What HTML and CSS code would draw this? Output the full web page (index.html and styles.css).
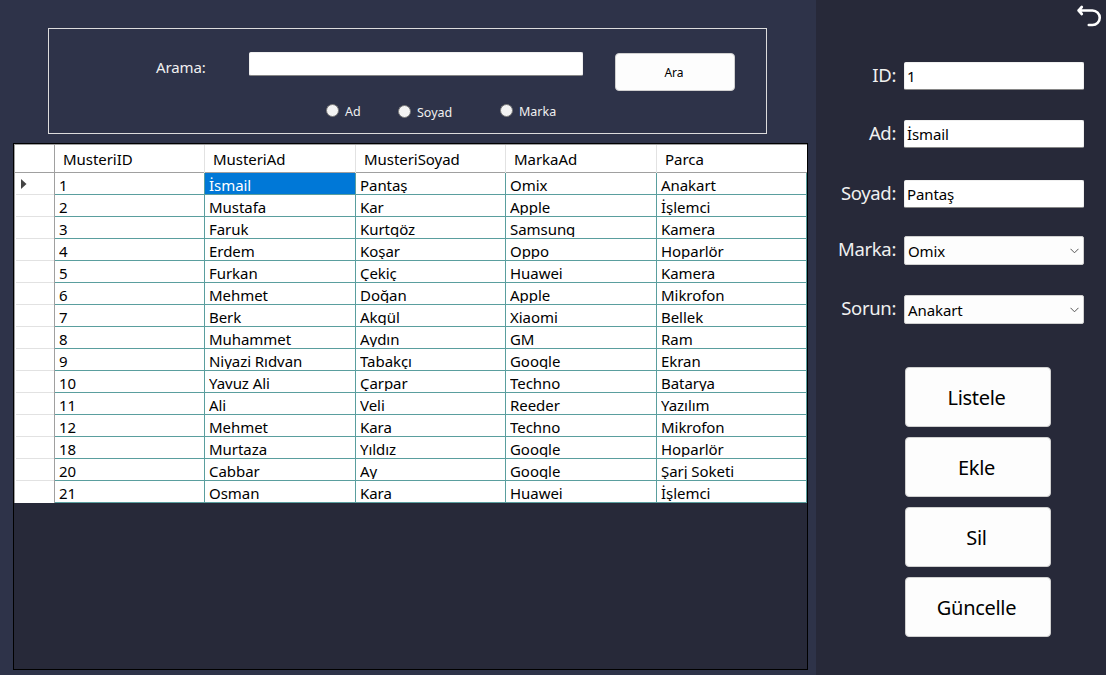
FILE: index.html
```html
<!DOCTYPE html>
<html lang="tr">
<head>
<meta charset="utf-8">
<title>Müşteri</title>
<link rel="stylesheet" href="styles.css">
<script src="grid.js" defer></script>
</head>
<body>
<div class="window">
  <main class="main">
    <section class="search">
      <div class="search-row">
        <label class="search-label" for="q">Arama:</label>
        <input class="search-input" id="q" type="text">
        <button class="search-button">Ara</button>
      </div>
      <div class="options">
        <label class="option"><i class="dot"></i><span>Ad</span></label>
        <label class="option option-soyad"><i class="dot"></i><span>Soyad</span></label>
        <label class="option option-marka"><i class="dot"></i><span>Marka</span></label>
      </div>
    </section>
    <section class="table-frame"><div class="table" id="table"></div></section>
  </main>
  <aside class="side">
    <svg class="back" width="26" height="24" viewBox="0 0 26 24"><path d="M2.5 6.5H16.5A7 7 0 0 1 16.5 21H12.8M5.8 3L2.6 6.5L5.8 10" fill="none" stroke="#fff" stroke-width="2.6" stroke-linecap="round" stroke-linejoin="round"/></svg>
    <div class="form">
      <div class="field"><span class="label">ID:</span><div class="box"><span>1</span></div></div>
      <div class="field"><span class="label">Ad:</span><div class="box"><span>İsmail</span></div></div>
      <div class="field"><span class="label">Soyad:</span><div class="box"><span>Pantaş</span></div></div>
      <div class="field field-marka"><span class="label">Marka:</span><div class="box select"><span>Omix</span><svg class="chevron" width="9" height="6" viewBox="0 0 9 6"><path d="M.5 .8L4.5 4.8L8.5 .8" fill="none" stroke="#555" stroke-width="1"/></svg></div></div>
      <div class="field field-sorun"><span class="label">Sorun:</span><div class="box select"><span>Anakart</span><svg class="chevron" width="9" height="6" viewBox="0 0 9 6"><path d="M.5 .8L4.5 4.8L8.5 .8" fill="none" stroke="#555" stroke-width="1"/></svg></div></div>
    </div>
    <div class="actions">
      <button class="action">Listele</button>
      <button class="action">Ekle</button>
      <button class="action">Sil</button>
      <button class="action">Güncelle</button>
    </div>
  </aside>
</div>
</body>
</html>
```
FILE: styles.css
```css
* { box-sizing: border-box; }
body { margin: 0; font-family: "Noto Sans", "Open Sans", sans-serif; background: #2e3349; }
button { font-family: inherit; color: #000; background: #fdfdfd; border: 1px solid #d0d0d0; padding: 0; }
.window { display: flex; width: 1106px; height: 675px; overflow: hidden; }
.main { width: 816px; padding: 28px 8px 5px 13px; background: #2e3349; }
.search { width: 719px; height: 106px; margin: 0 0 9px 35px; padding-top: 23px; border: 1px solid #dcdcdc; }
.search-row { display: flex; align-items: flex-start; height: 50px; padding-left: 107px; }
.search-label { width: 93px; padding-top: 4px; font-size: 15px; letter-spacing: -0.1px; line-height: 22px; color: #f0f0f0; }
.search-input { width: 334px; height: 24px; margin-right: 32px; padding: 0; border: 1px solid #f0f0f0; border-bottom-color: #868686; border-radius: 2px; background: #fff; }
.search-button { width: 120px; height: 38px; margin-top: 1px; padding-right: 2px; border-radius: 4px; font-size: 12px; }
.options { display: flex; padding-left: 277px; }
.option { display: flex; gap: 6px; width: 72px; height: 20px; font-size: 12.5px; line-height: 18px; color: #f0f0f0; }
.option-soyad { width: 102px; padding-top: 1px; }
.dot { width: 13px; height: 13px; margin-top: 2px; border: 1px solid #777; border-radius: 50%; background: #f3f3f3; }
.option span { margin-top: 1px; }
.table-frame { width: 795px; height: 527px; border: 1px solid #000; background: #272939; }
.table { width: 793px; }
.row { display: grid; grid-template-columns: 41px 150px 151px 150px 151px 150px; height: 22px; background: #fff; color: #000; font-size: 15px; letter-spacing: -0.05px; }
.cell { border-right: 1px solid #5a9e9e; border-bottom: 1px solid #5a9e9e; padding-left: 4px; }
.cell span { display: block; height: 20px; padding-top: 5px; overflow: hidden; line-height: 15px; white-space: nowrap; }
.selected { background: #0078d7; color: #fff; }
.row-head { display: flex; align-items: center; padding-left: 6px; border-left: 1px solid #a0a0a0; border-right: 1px solid #a0a0a0; background: linear-gradient(#e2e2e2, #e2e2e2) right bottom / 38px 1px no-repeat; }
.row:last-child .row-head { background: none; }
.head { height: 29px; border-top: 1px solid #a0a0a0; border-bottom: 1px solid #a0a0a0; }
.head .row-head { background: none; }
.head-cell { padding-left: 8px; line-height: 29px; background: linear-gradient(#e2e2e2, #e2e2e2) right top / 1px 100% no-repeat; }
.head-cell:last-child { background: none; }
.side { display: flex; flex-direction: column; width: 290px; background: #272939; }
.back { margin: 4px 0 0 260px; }
.form { height: 339px; padding: 34px 0 0 16px; }
.field { display: flex; gap: 8px; height: 28px; margin-bottom: 30px; }
.field:nth-child(2) { margin-bottom: 32px; }
.field:nth-child(3) { margin-bottom: 28px; }
.label { width: 64px; text-align: right; color: #f0f0f0; font-size: 18.5px; letter-spacing: -0.35px; line-height: 26px; }
.box { display: flex; align-items: center; width: 180px; height: 28px; padding: 0 3px 0 2px; border: 1px solid #f0f0f0; border-bottom-color: #868686; border-radius: 2px; background: #fff; color: #000; font-size: 15px; letter-spacing: -0.1px; line-height: 24px; }
.select { justify-content: space-between; height: 29px; padding: 1px 4px 0 3px; border-color: #d0d0d0; background: #fdfdfd; }
.field-marka { height: 29px; }
.chevron { margin-bottom: 1px; }
.actions { display: flex; flex-direction: column; gap: 10px; padding-left: 89px; }
.action { width: 146px; height: 60px; padding: 1px 3px 0 0; border-radius: 4px; font-size: 20px; letter-spacing: -0.3px; }
```
FILE: grid.js
```javascript
const headers = ["MusteriID", "MusteriAd", "MusteriSoyad", "MarkaAd", "Parca"];
const records = [
  ["1", "İsmail", "Pantaş", "Omix", "Anakart"],
  ["2", "Mustafa", "Kar", "Apple", "İşlemci"],
  ["3", "Faruk", "Kurtgöz", "Samsung", "Kamera"],
  ["4", "Erdem", "Koşar", "Oppo", "Hoparlör"],
  ["5", "Furkan", "Çekiç", "Huawei", "Kamera"],
  ["6", "Mehmet", "Doğan", "Apple", "Mikrofon"],
  ["7", "Berk", "Akgül", "Xiaomi", "Bellek"],
  ["8", "Muhammet", "Aydın", "GM", "Ram"],
  ["9", "Niyazi Rıdvan", "Tabakçı", "Google", "Ekran"],
  ["10", "Yavuz Ali", "Çarpar", "Techno", "Batarya"],
  ["11", "Ali", "Veli", "Reeder", "Yazılım"],
  ["12", "Mehmet", "Kara", "Techno", "Mikrofon"],
  ["18", "Murtaza", "Yıldız", "Google", "Hoparlör"],
  ["20", "Cabbar", "Ay", "Google", "Şarj Soketi"],
  ["21", "Osman", "Kara", "Huawei", "İşlemci"]
];
const marker = '<svg width="6" height="10" viewBox="0 0 6 10"><path d="M0 0L5.5 5L0 10Z" fill="#444"/></svg>';
const head = '<div class="row head"><div class="row-head"></div>' +
  headers.map(h => `<div class="head-cell">${h}</div>`).join("") + "</div>";
const body = records.map((r, i) =>
  `<div class="row"><div class="row-head">${i === 0 ? marker : ""}</div>` +
  r.map((v, j) => `<div class="cell${i === 0 && j === 1 ? " selected" : ""}"><span>${v}</span></div>`).join("") +
  "</div>").join("");
document.getElementById("table").innerHTML = head + body;
```
